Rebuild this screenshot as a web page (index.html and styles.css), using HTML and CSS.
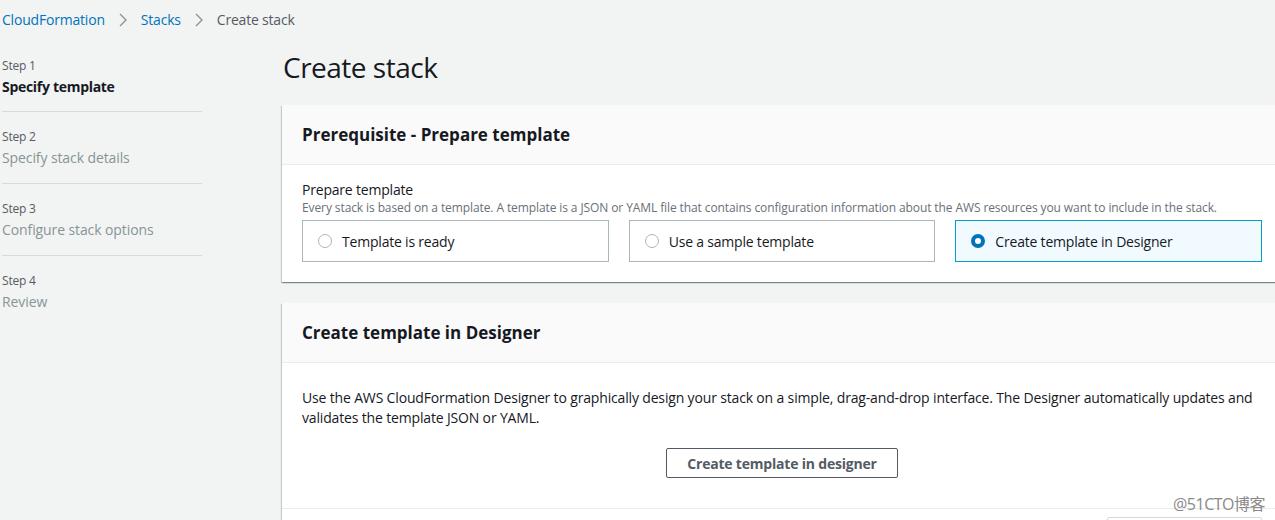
FILE: index.html
```html
<!DOCTYPE html>
<html lang="en">
<head>
    <meta charset="UTF-8">
    <title>CloudFormation - Create stack</title>
    <link rel="stylesheet" href="styles.css">
</head>
<body>

    <nav class="kirinti">
        <a href="#">CloudFormation</a>
        <svg class="ok" width="10" height="14" viewBox="0 0 10 14"><path d="M2 1 L8 7 L2 13" fill="none" stroke="#879596" stroke-width="1.4"/></svg>
        <a href="#">Stacks</a>
        <svg class="ok" width="10" height="14" viewBox="0 0 10 14"><path d="M2 1 L8 7 L2 13" fill="none" stroke="#879596" stroke-width="1.4"/></svg>
        <span>Create stack</span>
    </nav>

    <section class="duzen">
        <aside class="adimlar">
            <div class="adim aktif">
                <small>Step 1</small>
                <p>Specify template</p>
            </div>
            <div class="adim">
                <small>Step 2</small>
                <p>Specify stack details</p>
            </div>
            <div class="adim">
                <small>Step 3</small>
                <p>Configure stack options</p>
            </div>
            <div class="adim">
                <small>Step 4</small>
                <p>Review</p>
            </div>
        </aside>

        <main class="icerik">
            <h1>Create stack</h1>

            <div class="kutu">
                <div class="kutuBaslik">
                    <h2>Prerequisite - Prepare template</h2>
                </div>
                <div class="kutuGovde">
                    <div class="etiket">Prepare template</div>
                    <div class="aciklama">Every stack is based on a template. A template is a JSON or YAML file that contains configuration information about the AWS resources you want to include in the stack.</div>
                    <div class="secenekler">
                        <label class="secenek"><span class="radyo"></span>Template is ready</label>
                        <label class="secenek"><span class="radyo"></span>Use a sample template</label>
                        <label class="secenek secili"><span class="radyo"></span>Create template in Designer</label>
                    </div>
                </div>
            </div>

            <div class="kutu">
                <div class="kutuBaslik">
                    <h2>Create template in Designer</h2>
                </div>
                <div class="kutuGovde genis">
                    <p class="metin">Use the AWS CloudFormation Designer to graphically design your stack on a simple, drag-and-drop interface. The Designer automatically updates and validates the template JSON or YAML.</p>
                    <div class="ortala">
                        <button class="btn">Create template in designer</button>
                    </div>
                </div>
                <div class="kutuAlt">
                    <button class="btn altBtn" aria-label="View in Designer"></button>
                </div>
            </div>
        </main>
    </section>

    <div class="filigran">@51CTO博客</div>
</body>
</html>
```

FILE: styles.css
```css
body {
    margin: 0;
    padding: 0;
    background-color: #f2f3f3;
    font-family: "Open Sans", "Noto Sans CJK SC", sans-serif;
    color: #16191f;
    overflow: hidden;
    height: 520px;
    width: 1275px;
    position: relative;
}

.kirinti {
    display: flex;
    align-items: center;
    gap: 13px;
    padding: 9px 0 0 2px;
    height: 21px;
    font-size: 14px;
    letter-spacing: -0.2px;
}

.kirinti a {
    color: #0073bb;
    text-decoration: none;
}

.kirinti span {
    color: #545b64;
}

.ok {
    display: block;
}

.duzen {
    display: grid;
    grid-template-columns: 200px 1000px;
    column-gap: 80px;
    padding-left: 2px;
    margin-top: 25px;
}

.adimlar {
    display: flex;
    flex-direction: column;
}

.adim {
    height: 57px;
    border-bottom: 1px solid #d5dbdb;
    box-sizing: border-box;
    padding-top: 3px;
}

.adim + .adim {
    height: 72px;
    padding-top: 17px;
}

.adim:last-child {
    border-bottom: none;
}

.adim small {
    display: block;
    font-size: 12px;
    line-height: 16px;
    color: #545b64;
    letter-spacing: -0.2px;
}

.adim p {
    margin: 3px 0 0;
    font-size: 14px;
    line-height: 20px;
    color: #879596;
    letter-spacing: -0.1px;
}

.adim.aktif p {
    font-weight: bold;
    color: #16191f;
    letter-spacing: -0.3px;
}

.icerik h1 {
    margin: -6px 0 0 1px;
    font-size: 28px;
    font-weight: normal;
    line-height: 36px;
    letter-spacing: -0.5px;
    padding-bottom: 20px;
}

.kutu {
    background-color: #ffffff;
    box-shadow: 0 1px 1px 0 rgba(0, 28, 36, 0.3), 1px 1px 1px 0 rgba(0, 28, 36, 0.15), -1px 1px 1px 0 rgba(0, 28, 36, 0.15);
    margin-bottom: 21px;
}

.kutuBaslik {
    background-color: #fafafa;
    border-bottom: 1px solid #eaeded;
    padding: 19px 20px 18px;
}

.kutuBaslik h2 {
    margin: 0;
    font-size: 17px;
    line-height: 22px;
    font-weight: bold;
    letter-spacing: 0;
}

.kutuGovde {
    padding: 15px 20px 20px;
}

.etiket {
    font-size: 14px;
    line-height: 20px;
    letter-spacing: -0.2px;
}

.aciklama {
    font-size: 12px;
    line-height: 16px;
    color: #687078;
    letter-spacing: -0.1px;
    white-space: nowrap;
}

.secenekler {
    display: grid;
    grid-template-columns: repeat(3, 1fr);
    column-gap: 20px;
    margin-top: 4px;
}

.secenek {
    display: flex;
    align-items: center;
    gap: 10px;
    height: 42px;
    box-sizing: border-box;
    border: 1px solid #aab7b8;
    padding-left: 15px;
    font-size: 14px;
    letter-spacing: -0.2px;
}

.radyo {
    width: 12px;
    height: 12px;
    border: 1px solid #aab7b8;
    border-radius: 50%;
}

.secili {
    background-color: #f1faff;
    border-color: #00a1c9;
}

.secili .radyo {
    width: 6px;
    height: 6px;
    border: 4px solid #0073bb;
    background-color: #ffffff;
}

.genis {
    padding: 25px 20px 30px;
}

.metin {
    margin: 0;
    font-size: 14px;
    line-height: 20px;
    letter-spacing: -0.16px;
}

.ortala {
    display: flex;
    justify-content: center;
    margin-top: 20px;
}

.btn {
    font-family: "Open Sans", sans-serif;
    font-size: 14px;
    font-weight: bold;
    color: #545b64;
    background-color: #ffffff;
    border: 1px solid #545b64;
    border-radius: 2px;
    height: 30px;
    padding: 0 20px;
    letter-spacing: -0.2px;
}

.kutuAlt {
    border-top: 1px solid #eaeded;
    display: flex;
    justify-content: flex-end;
    padding: 8px 20px 20px;
}

.altBtn {
    width: 155px;
    border-color: #d5dbdb;
}

.filigran {
    position: absolute;
    right: 10px;
    top: 491px;
    font-size: 16px;
    color: #8a8a8a;
    letter-spacing: -0.5px;
}
```
